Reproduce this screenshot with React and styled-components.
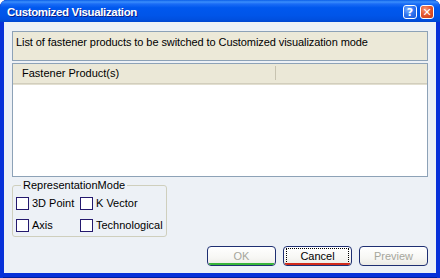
import React from "react";
import styled, { createGlobalStyle } from "styled-components";

const Global = createGlobalStyle`
  html, body { margin: 0; padding: 0; background: #ffffff; }
  body { font-family: "Liberation Sans", Arial, sans-serif; font-size: 11px; }
  * { box-sizing: border-box; }
`;

const Window = styled.div`
  width: 440px;
  height: 278px;
  display: flex;
  flex-direction: column;
  background: #0831d9;
  border-radius: 7px 7px 0 0;
  overflow: hidden;
  box-shadow: inset 1px 0 0 #001ea0, inset -1px 0 0 #001ea0, inset 0 -1px 0 #001ea0;
`;

const TitleBar = styled.div`
  height: 22px;
  flex: none;
  display: flex;
  align-items: center;
  padding: 0 6px 0 7px;
  background: linear-gradient(
    to bottom,
    #0a5ee8 0%,
    #3b8ffc 9%,
    #1a6cf6 18%,
    #0058ee 35%,
    #0055e9 70%,
    #0050e0 88%,
    #0046d0 100%
  );
`;

const Title = styled.div`
  flex: 1;
  color: #ffffff;
  font-family: "Liberation Sans", Arial, sans-serif;
  font-weight: bold;
  font-size: 11.5px;
  letter-spacing: -0.35px;
  text-shadow: 1px 1px 0 #0a1e8a;
  padding-top: 1px;
`;

const CapButton = styled.div`
  width: 14px;
  height: 14px;
  margin-left: 3px;
  margin-top: 2px;
  border: 1px solid #ffffff;
  border-radius: 3px;
  display: flex;
  align-items: center;
  justify-content: center;
  background: ${(p) =>
    p.$close
      ? "radial-gradient(circle at 35% 30%, #f59a7c 0%, #e6582e 45%, #c5391a 100%)"
      : "radial-gradient(circle at 35% 30%, #7fb0ff 0%, #2d73f0 50%, #1a55d6 100%)"};
  color: #ffffff;
  font-weight: bold;
  font-size: 11px;
  font-family: "DejaVu Sans", sans-serif;
`;

const Frame = styled.div`
  flex: 1;
  display: flex;
  padding: 0 4px 5px 4px;
  box-shadow: inset 3px 0 0 #0831d9, inset -3px 0 0 #0831d9;
`;

const Client = styled.div`
  flex: 1;
  background: #edf1f6;
  display: flex;
  flex-direction: column;
  padding: 9px 8px 7px 8px;
  color: #000000;
  font-family: "Liberation Sans", Arial, sans-serif;
  font-size: 11px;
`;

const InfoPanel = styled.div`
  height: 30px;
  flex: none;
  background: #ece9d8;
  border: 1px solid #8da2b7;
  padding: 3px 3px;
  line-height: 14px;
  letter-spacing: -0.08px;
`;

const ListBox = styled.div`
  margin-top: 2px;
  height: 114px;
  flex: none;
  background: #ffffff;
  border: 1px solid #8da2b7;
  display: flex;
  flex-direction: column;
`;

const HeaderRow = styled.div`
  height: 20px;
  flex: none;
  display: flex;
  background: #ebe8d7;
  border-bottom: 1px solid #d2cebd;
  box-shadow: 0 1px 0 #e2dfd0;
`;

const HeaderCell = styled.div`
  width: ${(p) => p.$w || "auto"};
  flex: ${(p) => (p.$grow ? 1 : "none")};
  display: flex;
  align-items: center;
  padding-left: 9px;
  border-right: ${(p) => (p.$grow ? "none" : "1px solid #c7c3b0")};
  margin: 2px 0 3px 0;
`;

const GroupBox = styled.fieldset`
  margin: 2px 0 0 0;
  width: 155px;
  height: 58px;
  flex: none;
  border: 1px solid #cfcfbd;
  border-radius: 3px;
  padding: 1px 0 0 3px;
  display: grid;
  grid-template-columns: 64px auto;
  grid-template-rows: 22px 22px;
`;

const Legend = styled.legend`
  padding: 0 2px;
  margin-left: 5px;
  color: #000000;
  line-height: 12px;
`;

const Check = styled.label`
  display: flex;
  align-items: center;
  gap: 3px;
  white-space: nowrap;
`;

const Box = styled.span`
  width: 13px;
  height: 13px;
  flex: none;
  border: 1px solid #24196e;
  background: #ffffff;
  display: inline-block;
`;

const ButtonRow = styled.div`
  margin-top: auto;
  display: flex;
  justify-content: flex-end;
  gap: 7px;
`;

const Button = styled.div`
  position: relative;
  width: 69px;
  height: 20px;
  border: 1px solid #1e2f72;
  border-radius: 4px;
  background: linear-gradient(to bottom, #ffffff 0%, #f7f7f4 60%, #ecebe5 100%);
  display: flex;
  align-items: center;
  justify-content: center;
  color: ${(p) => (p.$disabled ? "#a6a69c" : "#000000")};
  overflow: hidden;
  &::after {
    content: "";
    position: absolute;
    left: 1px;
    right: 1px;
    bottom: 0;
    height: 2px;
    background: ${(p) => p.$line || "transparent"};
  }
`;

const Focus = styled.span`
  border: 1px dotted #000000;
  padding: 1px 3px 0 3px;
  margin: 0 2px;
  flex: 1;
  text-align: center;
  line-height: 13px;
`;

export default function App() {
  return (
    <>
      <Global />
      <Window>
        <TitleBar>
          <Title>Customized Visualization</Title>
          <CapButton>?</CapButton>
          <CapButton $close>✕</CapButton>
        </TitleBar>
        <Frame>
          <Client>
            <InfoPanel>
              List of fastener products to be switched to Customized visualization mode
            </InfoPanel>
            <ListBox>
              <HeaderRow>
                <HeaderCell $w="263px">Fastener Product(s)</HeaderCell>
                <HeaderCell $grow />
              </HeaderRow>
            </ListBox>
            <GroupBox>
              <Legend>RepresentationMode</Legend>
              <Check><Box />3D Point</Check>
              <Check><Box />K Vector</Check>
              <Check><Box />Axis</Check>
              <Check><Box />Technological</Check>
            </GroupBox>
            <ButtonRow>
              <Button $disabled $line="#38b53a">OK</Button>
              <Button $line="#d22b1c"><Focus>Cancel</Focus></Button>
              <Button $disabled>Preview</Button>
            </ButtonRow>
          </Client>
        </Frame>
      </Window>
    </>
  );
}
